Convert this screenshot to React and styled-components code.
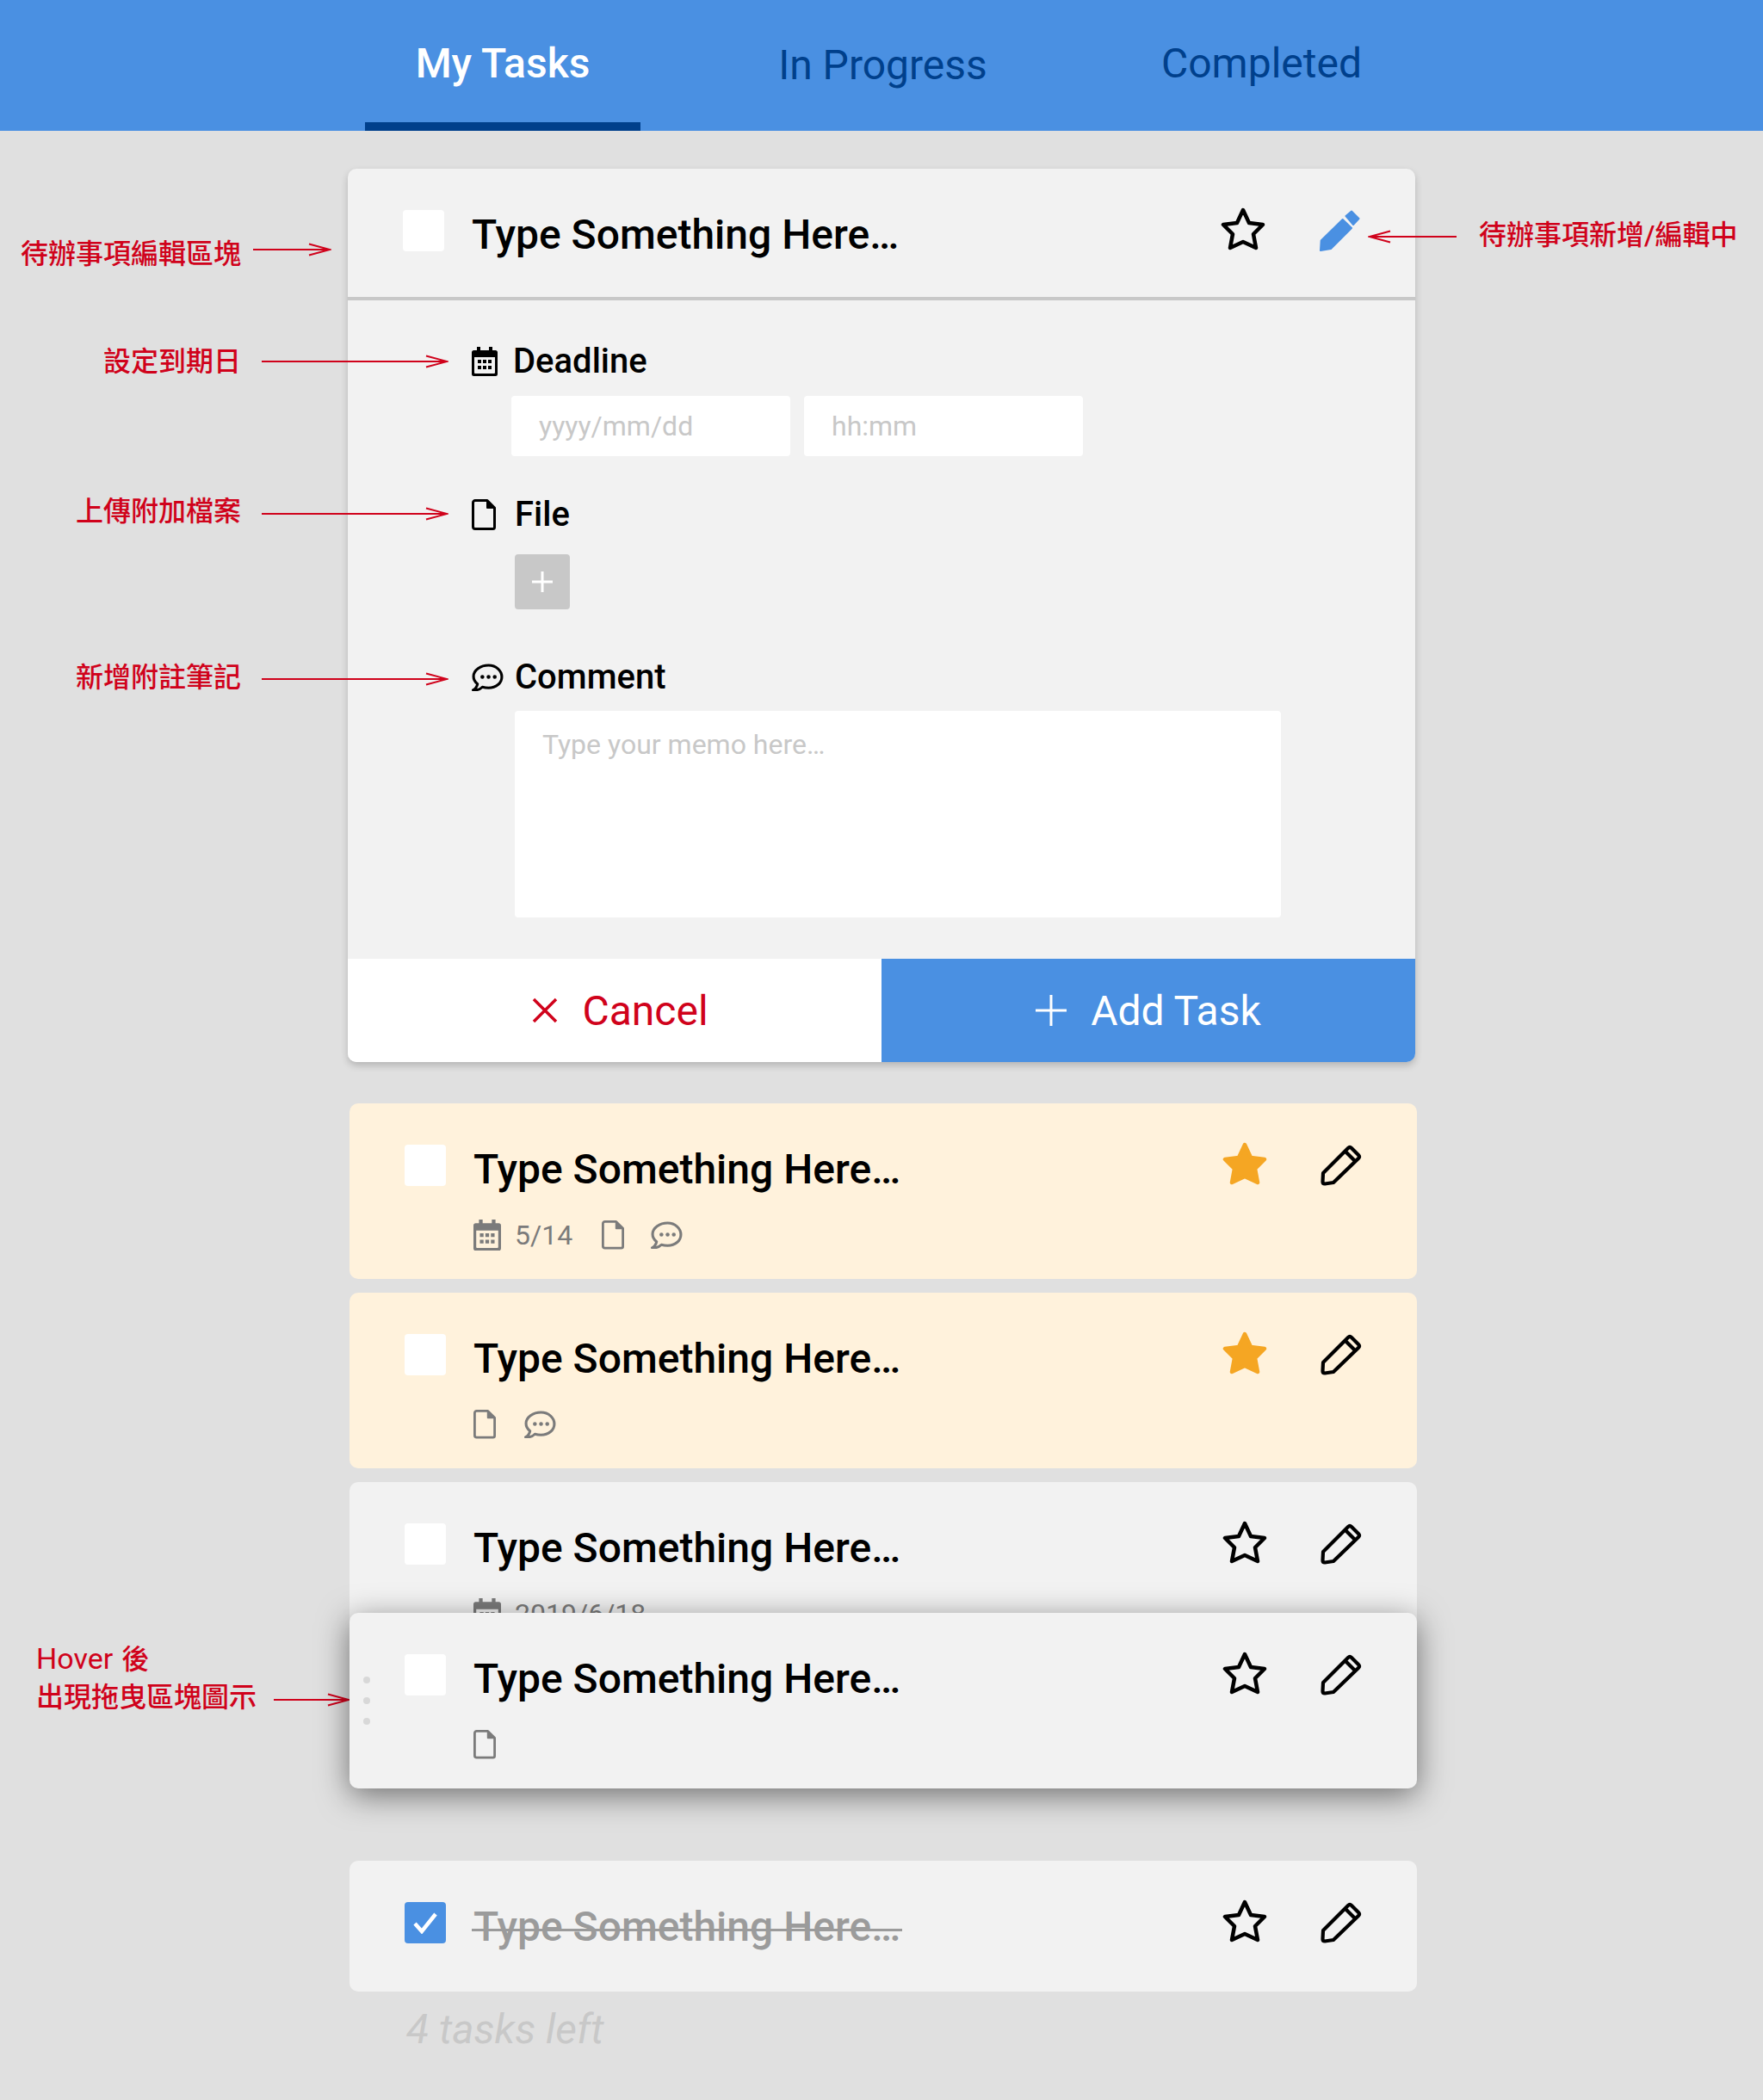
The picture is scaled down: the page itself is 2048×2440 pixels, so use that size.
import React from 'react';
import styled, { createGlobalStyle } from 'styled-components';

const GlobalStyle = createGlobalStyle`
  html, body {
    margin: 0;
    padding: 0;
    background: #E0E0E0;
  }
  * {
    box-sizing: border-box;
  }
`;

const Page = styled.div`
  position: relative;
  width: 2048px;
  height: 2440px;
  overflow: hidden;
  background: #E0E0E0;
  font-family: Roboto, "Noto Sans CJK TC", sans-serif;
`;

// Tabs

const TabBar = styled.nav`
  display: flex;
  justify-content: center;
  gap: 120px;
  height: 152px;
  background: #4A90E2;
`;

const Tab = styled.div`
  width: 320px;
  height: 152px;
  padding-top: ${(p) => p.$top}px;
  padding-left: ${(p) => (p.$active ? 0 : 3)}px;
  border-bottom: 10px solid ${(p) => (p.$active ? '#00408C' : 'transparent')};
  text-align: center;
  font-size: 48px;
  line-height: 56px;
  font-weight: ${(p) => (p.$active ? 500 : 400)};
  color: ${(p) => (p.$active ? '#FFFFFF' : '#00408C')};
`;

// Editor card

const Content = styled.main`
  width: 1240px;
  margin: 44px auto 0;
`;

const EditCard = styled.section`
  border-radius: 10px;
  background: #F2F2F2;
  box-shadow: 0 4px 8px rgba(0, 0, 0, 0.2);
  overflow: hidden;
`;

const EditHead = styled.div`
  display: flex;
  height: 153px;
  padding: 48px 0 0 64px;
  border-bottom: 4px solid #C8C8C8;
`;

const EditBody = styled.div`
  height: 765px;
  padding-top: 51px;
  padding-left: 144px;
`;

const Field = styled.div`
  margin-bottom: ${(p) => p.$after}px;
`;

const FieldLabel = styled.div`
  display: flex;
  align-items: center;
  height: 40px;
  font-size: 40px;
  line-height: 40px;
  font-weight: 500;
  color: #000000;
`;

const LabelIcon = styled.span`
  display: flex;
  width: ${(p) => p.$w}px;
  color: #000000;
`;

const FieldInputs = styled.div`
  display: flex;
  gap: 16px;
  margin-top: 20px;
  margin-left: 46px;
`;

const FakeInput = styled.div`
  width: 324px;
  height: 70px;
  padding-left: 32px;
  border-radius: 4px;
  background: #FFFFFF;
  font-size: 32px;
  line-height: 70px;
  color: #C8C8C8;
`;

const UploadButton = styled.div`
  display: flex;
  align-items: center;
  justify-content: center;
  width: 64px;
  height: 64px;
  margin-top: 26px;
  margin-left: 50px;
  border-radius: 4px;
  background: #C8C8C8;
  color: #FFFFFF;
`;

const Memo = styled.div`
  width: 890px;
  height: 240px;
  margin-top: 19px;
  margin-left: 50px;
  padding: 20px 32px;
  border-radius: 4px;
  background: #FFFFFF;
  font-size: 32px;
  line-height: 38px;
  color: #C8C8C8;
`;

const Actions = styled.div`
  display: flex;
  height: 120px;
`;

const ActionButton = styled.div`
  display: flex;
  flex: 0 0 50%;
  align-items: center;
  justify-content: center;
  gap: ${(p) => p.$gap}px;
  padding-left: ${(p) => p.$shift}px;
  font-size: 48px;
  background: ${(p) => (p.$primary ? '#4A90E2' : '#FFFFFF')};
  color: ${(p) => (p.$primary ? '#FFFFFF' : '#D0021B')};
`;

// Task rows

const TaskList = styled.div`
  display: flex;
  flex-direction: column;
  gap: 16px;
  margin-top: 48px;
  margin-left: 2px;
  width: 1240px;
`;

const TaskCard = styled.article`
  position: relative;
  display: flex;
  height: ${(p) => (p.$short ? 152 : 204)}px;
  padding: 48px 0 0 64px;
  border-radius: 10px;
  background: ${(p) => (p.$starred ? '#FFF2DC' : '#F2F2F2')};
  ${(p) => p.$hover && `
    margin-top: -68px;
    z-index: 2;
    box-shadow: 0 8px 36px rgba(0, 0, 0, 0.5);
  `}
  ${(p) => p.$done && 'margin-top: 68px;'}
`;

const DragHandle = styled.div`
  position: absolute;
  left: 16px;
  top: 74px;
  display: flex;
  flex-direction: column;
  gap: 16px;
`;

const DragDot = styled.span`
  width: 8px;
  height: 8px;
  border-radius: 50%;
  background: #D8D8D8;
`;

const Checkbox = styled.div`
  display: flex;
  align-items: center;
  justify-content: center;
  flex: none;
  width: 48px;
  height: 48px;
  border-radius: 4px;
  background: ${(p) => (p.$checked ? '#4A90E2' : '#FFFFFF')};
`;

const TaskMain = styled.div`
  flex: 1;
  margin-left: 32px;
`;

const TaskTitle = styled.div`
  position: relative;
  width: fit-content;
  margin-top: 1px;
  font-size: 48px;
  line-height: 56px;
  font-weight: 500;
  color: ${(p) => (p.$done ? '#9B9B9B' : '#000000')};
  ${(p) => p.$done && `
    &::after {
      content: '';
      position: absolute;
      left: -2px;
      right: -2px;
      top: 30px;
      height: 3px;
      background: #9B9B9B;
    }
  `}
`;

const TaskMeta = styled.div`
  display: flex;
  align-items: center;
  height: 36px;
  margin-top: 30px;
  color: #7B7B7B;
  font-size: 32px;
`;

const MetaDate = styled.span`
  margin-left: 16px;
  margin-right: 34px;
`;

const MetaGap = styled.span`
  display: flex;
  margin-right: ${(p) => p.$after}px;
`;

const TaskTools = styled.div`
  display: flex;
  align-items: flex-start;
  gap: 62px;
  padding-right: 64px;
`;

const Footer = styled.div`
  margin-top: 16px;
  margin-left: 68px;
  font-size: 48px;
  line-height: 56px;
  font-style: italic;
  font-weight: 400;
  color: #C8C8C8;
`;

// Red annotations

const Note = styled.div`
  position: absolute;
  left: ${(p) => p.$x}px;
  top: ${(p) => p.$y}px;
  font-family: Roboto, "Noto Sans CJK TC", sans-serif;
  font-size: 32px;
  font-weight: 500;
  line-height: 44px;
  color: #D0021B;
  white-space: nowrap;
`;

const HoverWord = styled.span`
  font-size: 34px;
  font-weight: 400;
  margin-right: 2px;
`;

const NoteArrow = styled.svg`
  position: absolute;
  left: ${(p) => p.$x}px;
  top: ${(p) => p.$y - 8}px;
  display: block;
`;

const Arrow = ({ x, y, width, left }) => (
  <NoteArrow $x={x} $y={y} width={width} height="16" viewBox={`0 0 ${width} 16`} fill="none" stroke="#D0021B" strokeWidth="2">
    {left ? (
      <path d={`M${width} 8H2M26 1.500L2 8l24 6.500`} />
    ) : (
      <path d={`M0 8H${width - 2}M${width - 26} 1.500L${width - 2} 8l-24 6.500`} />
    )}
  </NoteArrow>
);

// Icons

const CalendarIcon = ({ w = 30 }) => (
  <svg width={w} height={(w * 34) / 30} viewBox="0 0 30 34" fill="currentColor">
    <path fillRule="evenodd" d="M6 0h4v4h10V0h4v4h3.500A2.500 2.500 0 0 1 30 6.500v25a2.500 2.500 0 0 1-2.500 2.500h-25A2.500 2.500 0 0 1 0 31.500v-25A2.500 2.500 0 0 1 2.500 4H6V0zM3 12v18a1 1 0 0 0 1 1h22a1 1 0 0 0 1-1V12H3z" />
    <path d="M7 15h4v4H7zM13 15h4v4h-4zM19 15h4v4h-4zM7 22h4v4H7zM13 22h4v4h-4zM19 22h4v4h-4z" />
  </svg>
);

const FileIcon = ({ w = 28, sw = 3 }) => (
  <svg width={w} height={(w * 36) / 28} viewBox="0 0 28 36" fill="none" stroke="currentColor" strokeWidth={sw} strokeLinejoin="round">
    <path d="M4 1.500h14l8.500 8.500v22.500a2 2 0 0 1-2 2H4a2.500 2.500 0 0 1-2.500-2.500V4A2.500 2.500 0 0 1 4 1.500z" />
    <path d="M18 1.500v8.500h8.500" fill="currentColor" stroke="none" />
    <path d="M18 2v8h8" strokeWidth="2" />
  </svg>
);

const CommentIcon = ({ w = 37 }) => (
  <svg width={w} height={(w * 32) / 36} viewBox="1 0 36 32" fill="none" stroke="currentColor" strokeWidth="3" strokeLinejoin="round">
    <path d="M20 2C11 2 3 7.500 3 14.500c0 3.500 2 6.500 4.500 8.500-.5 3-2.500 5.500-5 7 4 .3 8-1 10.500-3.500 2 .6 4.500 1 7 1 8.500 0 15-5.500 15-12.500S28.500 2 20 2z" />
    <g fill="currentColor" stroke="none">
      <circle cx="13" cy="15" r="2.200" />
      <circle cx="20" cy="15" r="2.200" />
      <circle cx="27" cy="15" r="2.200" />
    </g>
  </svg>
);

const STAR_POINTS = '26,3 33,18 49,20 38,31 41,47 26,40 11,47 14,31 3,20 19,18';

const StarIcon = ({ filled }) => (
  <svg width="52" height="50" viewBox="0 0 52 50" fill={filled ? '#F5A623' : 'none'} stroke={filled ? '#F5A623' : '#000000'} strokeWidth="4.500" strokeLinejoin="round" style={{ marginTop: -3 }}>
    <polygon points={STAR_POINTS} />
  </svg>
);

const PencilIcon = ({ active }) => (
  active ? (
    <svg width="48" height="48" viewBox="0 0 48 48" fill="#4A90E2" stroke="#4A90E2" strokeWidth="2" strokeLinejoin="round">
      <path d="M2.700 35.500L27.700 11l10.300 10L14 45l-12 2z" />
      <path d="M31.500 7L38 1.500 46.500 10 40 17z" />
    </svg>
  ) : (
    <svg width="48" height="48" viewBox="0 0 48 48" fill="none" stroke="#000000" strokeWidth="4.200" strokeLinejoin="round">
      <path d="M3 33L32 4q2-2 4 0l8 8q2 2 0 4L15 44 5 45.500q-2.500 0-2.500-2.500z" />
      <path d="M29 8l11 11" />
    </svg>
  )
);

const Plus = ({ size = 24, sw = 3 }) => (
  <svg width={size} height={size} viewBox={`0 0 ${size} ${size}`} stroke="currentColor" strokeWidth={sw}>
    <path d={`M${size / 2} 0V${size}M0 ${size / 2}H${size}`} />
  </svg>
);

const Cross = () => (
  <svg width="30" height="30" viewBox="0 0 30 30" stroke="currentColor" strokeWidth="3.500">
    <path d="M2 2l26 26M28 2L2 28" />
  </svg>
);

const Check = () => (
  <svg width="30" height="26" viewBox="0 0 30 26" fill="none" stroke="#FFFFFF" strokeWidth="4.500">
    <path d="M3 14l8 9L27 3" />
  </svg>
);

const Task = ({ starred, hover, done, short, children }) => (
  <TaskCard $starred={starred} $hover={hover} $done={done} $short={short}>
    {hover && (
      <DragHandle>
        <DragDot />
        <DragDot />
        <DragDot />
      </DragHandle>
    )}
    <Checkbox $checked={done}>{done && <Check />}</Checkbox>
    <TaskMain>
      <TaskTitle $done={done}>Type Something Here…</TaskTitle>
      {children && <TaskMeta>{children}</TaskMeta>}
    </TaskMain>
    <TaskTools>
      <StarIcon filled={starred} />
      <PencilIcon />
    </TaskTools>
  </TaskCard>
);

const App = () => (
  <Page>
    <GlobalStyle />
    <TabBar>
      <Tab $active $top={46}>My Tasks</Tab>
      <Tab $top={48}>In Progress</Tab>
      <Tab $top={46}>Completed</Tab>
    </TabBar>

    <Content>
      <EditCard>
        <EditHead>
          <Checkbox />
          <TaskMain>
            <TaskTitle>Type Something Here…</TaskTitle>
          </TaskMain>
          <TaskTools>
            <StarIcon />
            <PencilIcon active />
          </TaskTools>
        </EditHead>
        <EditBody>
          <Field $after={48}>
            <FieldLabel>
              <LabelIcon $w={48}><CalendarIcon /></LabelIcon>
              Deadline
            </FieldLabel>
            <FieldInputs>
              <FakeInput>yyyy/mm/dd</FakeInput>
              <FakeInput>hh:mm</FakeInput>
            </FieldInputs>
          </Field>
          <Field $after={59}>
            <FieldLabel>
              <LabelIcon $w={50}><FileIcon /></LabelIcon>
              File
            </FieldLabel>
            <UploadButton><Plus /></UploadButton>
          </Field>
          <Field>
            <FieldLabel>
              <LabelIcon $w={50}><CommentIcon /></LabelIcon>
              Comment
            </FieldLabel>
            <Memo>Type your memo here…</Memo>
          </Field>
        </EditBody>
        <Actions>
          <ActionButton $gap={28} $shift={13}><Cross />Cancel</ActionButton>
          <ActionButton $primary $gap={28} $shift={0}><Plus size={36} sw={3} />Add Task</ActionButton>
        </Actions>
      </EditCard>

      <TaskList>
        <Task starred>
          <CalendarIcon w={32} />
          <MetaDate>5/14</MetaDate>
          <MetaGap $after={31}><FileIcon w={26} /></MetaGap>
          <CommentIcon />
        </Task>
        <Task starred>
          <MetaGap $after={33}><FileIcon w={26} /></MetaGap>
          <CommentIcon />
        </Task>
        <Task>
          <CalendarIcon w={32} />
          <MetaDate>2019/6/18</MetaDate>
        </Task>
        <Task hover>
          <FileIcon w={26} />
        </Task>
        <Task done short />
      </TaskList>
      <Footer>4 tasks left</Footer>
    </Content>

    <Note $x={24} $y={273}>待辦事項編輯區塊</Note>
    <Arrow x={294} y={290} width={91} />
    <Note $x={120} $y={398}>設定到期日</Note>
    <Arrow x={304} y={420} width={217} />
    <Note $x={88} $y={572}>上傳附加檔案</Note>
    <Arrow x={304} y={597} width={217} />
    <Note $x={88} $y={765}>新增附註筆記</Note>
    <Arrow x={304} y={789} width={217} />
    <Note $x={1718} $y={251}>待辦事項新增/編輯中</Note>
    <Arrow x={1589} y={275} width={103} left />
    <Note $x={42} $y={1905}><HoverWord>Hover</HoverWord> 後<br />出現拖曳區塊圖示</Note>
    <Arrow x={318} y={1975} width={89} />
  </Page>
);

export default App;
